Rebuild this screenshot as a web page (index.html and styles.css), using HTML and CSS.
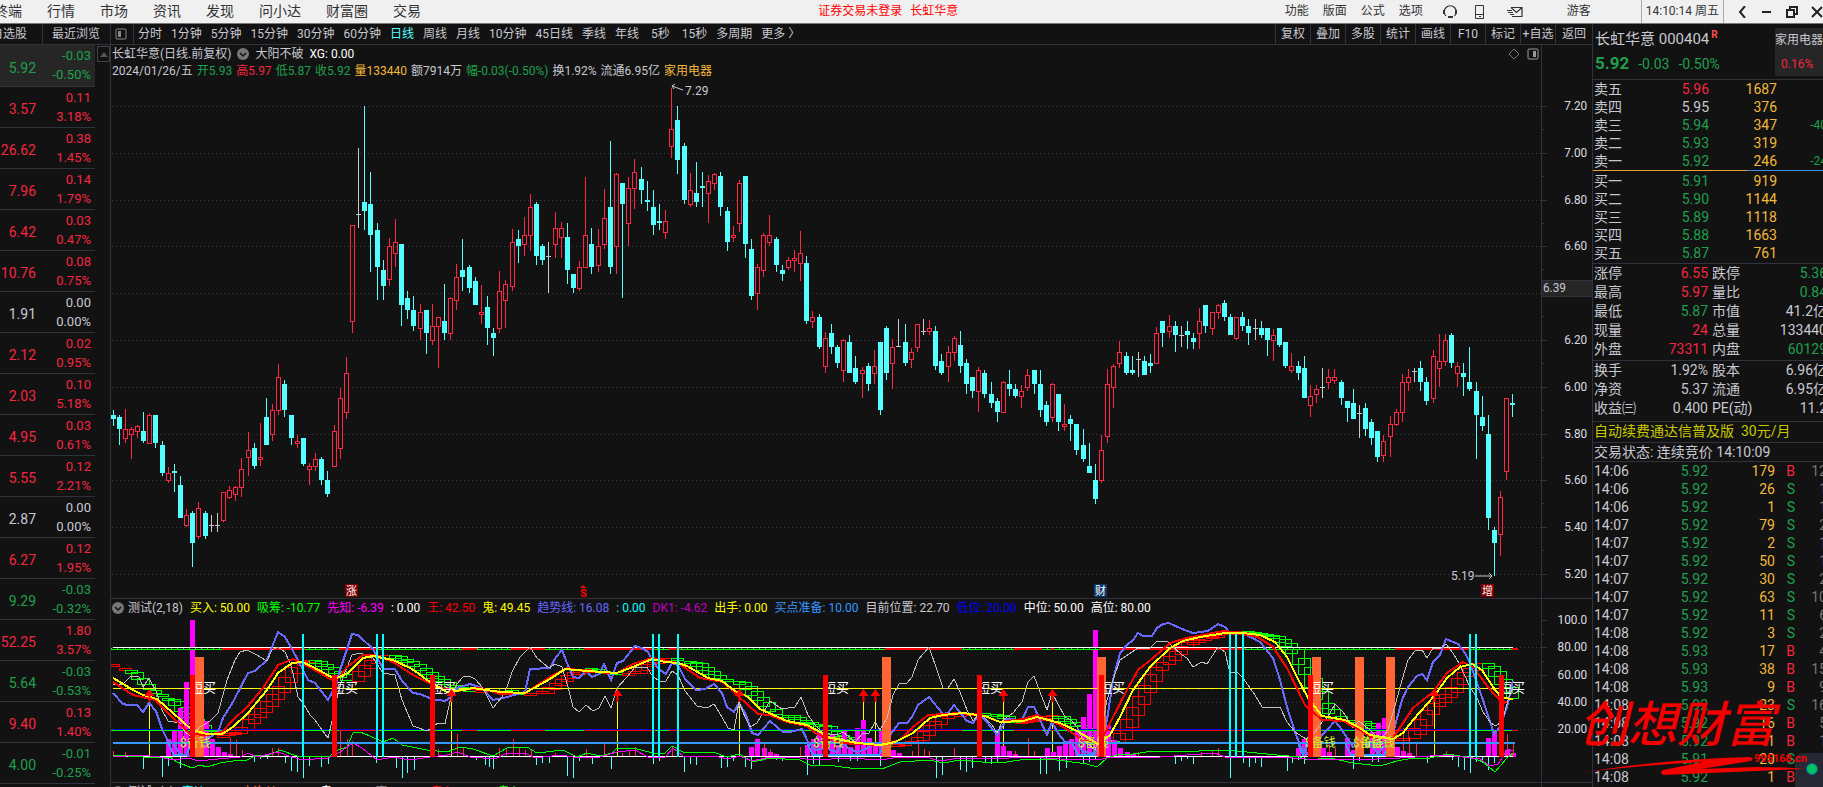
FILE: index.html
```
<!DOCTYPE html>
<html lang="zh-CN">
<head>
    <meta charset="UTF-8">
    <meta name="viewport" content="width=device-width, initial-scale=1.0">
    <title>长虹华意 000404</title>
    <link rel="stylesheet" href="styles.css">
</head>
<body>

<header class="topbar">
    <nav class="menu">
        <a href="#">终端</a><a href="#">行情</a><a href="#">市场</a><a href="#">资讯</a><a href="#">发现</a><a href="#">问小达</a><a href="#">财富圈</a><a href="#">交易</a>
    </nav>
    <div class="notice"><span>证券交易未登录</span><span>长虹华意</span></div>
    <div class="tools">
        <a href="#">功能</a><a href="#">版面</a><a href="#">公式</a><a href="#">选项</a>
        <svg class="tool-icon headset" width="16" height="16" viewBox="0 0 16 16"><path d="M4 12A6 6 0 1 1 12.500 12" fill="none" stroke="#333" stroke-width="1.200"/><path d="M1 6h2v4H1zM13 6h2v4h-2zM6 12h5v2H6z" fill="#333"/></svg>
        <svg class="tool-icon" width="16" height="16" viewBox="0 0 16 16"><path d="M3.500 1.500h8v13h-8zM3.500 10.500h8M7 12.500h2" fill="none" stroke="#333"/></svg>
        <svg class="tool-icon mail" width="18" height="16" viewBox="0 0 18 16"><path d="M5 3.500h11v9H6M5 3.500l5.500 5 5.500-5M1 6.500h5M2 8.500h5M4 10.500h4" fill="none" stroke="#333" stroke-width="1.200"/></svg>
        <a class="guest" href="#">游客</a>
    </div>
    <div class="clock">14:10:14 周五</div>
    <div class="win">
        <button aria-label="后退"><svg width="12" height="12"><path d="M9 0L4 6l5 6" fill="none" stroke="#222" stroke-width="2"/></svg></button>
        <button aria-label="最小化"><svg width="12" height="12"><path d="M1 6h9" stroke="#222" stroke-width="2"/></svg></button>
        <button aria-label="还原"><svg width="12" height="12"><path d="M1 4h7v7H1zM4 4V1h7v7H8" fill="none" stroke="#222" stroke-width="2"/></svg></button>
        <button aria-label="关闭"><svg width="12" height="12"><path d="M1 1l10 10M11 1L1 11" stroke="#222" stroke-width="2"/></svg></button>
    </div>
</header>

<div class="workspace">
    <aside class="watch">
        <div class="watch-tabs"><a href="#">自选股</a><a href="#">最近浏览</a></div>
        <div class="watch-body">
            <table class="watch-list"><tbody id="watch"></tbody></table>
            <button class="scroll-up" aria-label="向上"><svg width="8" height="5"><path d="M0 5l4-5 4 5z" fill="#555"/></svg></button>
        </div>
    </aside>

    <main class="center">
        <div class="periods">
            <button class="side" aria-label="侧栏"><svg width="12" height="12"><rect x="1" y="1" width="10" height="10" rx="1" fill="none" stroke="#888"/><path d="M3 3h3v6H3z" fill="#888"/></svg></button>
            <nav class="period-list">
                <a href="#">分时</a><a href="#">1分钟</a><a href="#">5分钟</a><a href="#">15分钟</a><a href="#">30分钟</a><a href="#">60分钟</a><a class="on" href="#">日线</a><a href="#">周线</a><a href="#">月线</a><a href="#">10分钟</a><a href="#">45日线</a><a href="#">季线</a><a href="#">年线</a><a class="sec" href="#">5秒</a><a class="sec" href="#">15秒</a><a href="#">多周期</a><a href="#">更多 〉</a>
            </nav>
            <div class="actions">
                <button>复权</button><button>叠加</button><button>多股</button><button>统计</button><button>画线</button><button>F10</button><button>标记</button><button class="tight">+自选</button><button>返回</button>
            </div>
        </div>

        <section class="pane">
            <div class="pane-main">
                <div class="line">
                    <span>长虹华意(日线.前复权)</span>
                    <svg class="fold" width="12" height="12"><circle cx="6" cy="6" r="6" fill="#777"/><path d="M3 5l3 3 3-3" fill="none" stroke="#131213" stroke-width="1.500"/></svg>
                    <span>大阳不破</span> <span class="white">XG: 0.00</span>
                    <span class="corner">
                        <svg width="12" height="12"><path d="M6 1l5 5-5 5-5-5z" fill="none" stroke="#777"/></svg>
                        <svg width="12" height="12"><rect x="1" y="1" width="10" height="10" rx="1" fill="none" stroke="#999"/><path d="M6 3h3v6H6z" fill="#999"/></svg>
                    </span>
                </div>
                <div class="line quote">
                    <span>2024/01/26/五</span><span class="down">开5.93</span><span class="up">高5.97</span><span class="down">低5.87</span><span class="down">收5.92</span><span class="gold">量133440</span><span>额7914万</span><span class="down">幅-0.03(-0.50%)</span><span>换1.92%</span><span>流通6.95亿</span><span class="gold">家用电器</span>
                </div>
                <svg id="kline" class="plot kline" viewBox="111 79 1430 519" preserveAspectRatio="none"></svg>
            </div>
            <svg id="kaxis" class="axis" viewBox="1541 45 51 553" preserveAspectRatio="none"></svg>
        </section>

        <section class="pane">
            <div class="pane-main">
                <div class="line inds">
                    <svg class="fold" width="12" height="12"><circle cx="6" cy="6" r="6" fill="#777"/><path d="M3 5l3 3 3-3" fill="none" stroke="#131213" stroke-width="1.500"/></svg>
                    <span>测试(2,18)</span><span class="c-yellow">买入: 50.00</span><span class="c-green">吸筹: -10.77</span><span class="c-magenta">先知: -6.39</span><span class="white">: 0.00</span><span class="c-red">王: 42.50</span><span class="c-yellow">鬼: 49.45</span><span class="c-violet">趋势线: 16.08</span><span class="c-cyan">: 0.00</span><span class="c-purple">DK1: -4.62</span><span class="c-yellow">出手: 0.00</span><span class="c-sky">买点准备: 10.00</span><span>目前位置: 22.70</span><span class="c-blue">低位: 20.00</span><span class="white">中位: 50.00</span><span class="white">高位: 80.00</span>
                </div>
                <svg id="ind" class="plot ind" viewBox="111 616 1430 166" preserveAspectRatio="none"></svg>
            </div>
            <svg id="iaxis" class="axis" viewBox="1541 599 51 183" preserveAspectRatio="none"></svg>
        </section>

        <section class="pane next">
            <div class="pane-main">
                <div class="line inds">
                    <svg class="fold" width="12" height="12"><circle cx="6" cy="6" r="6" fill="#777"/></svg>
                    <span>测试Y(1)</span><span class="c-cyan">底炒: 0.00</span><span class="c-orange">启次炒: 18.67</span><span class="white">鬼: 24.24</span><span class="c-grey">高: 26.24</span><span class="c-red">鬼入: 18.67</span><span class="c-green">鬼入: 22.81</span><span class="c-violet">: 18.23</span><span class="c-magenta">: 20.02</span>
                </div>
            </div>
            <div class="axis"></div>
        </section>
    </main>

    <aside class="detail">
        <div class="head">
            <div>
                <h1>长虹华意 000404<sup>R</sup></h1>
                <p class="down"><b>5.92</b><span>-0.03</span><span>-0.50%</span></p>
            </div>
            <div class="sector"><span>家用电器</span><span class="up">0.16%</span></div>
        </div>
        <table class="book sell"><tbody id="sell"></tbody></table>
        <div class="ratio"><i></i></div>
        <table class="book buy"><tbody id="buy"></tbody></table>
        <table class="facts">
            <tbody>
                <tr><th>涨停</th><td class="up">6.55</td><th>跌停</th><td class="down">5.36</td></tr>
                <tr><th>最高</th><td class="up">5.97</td><th>量比</th><td class="down">0.84</td></tr>
                <tr><th>最低</th><td class="down">5.87</td><th>市值</th><td>41.2亿</td></tr>
                <tr><th>现量</th><td class="up">24</td><th>总量</th><td>133440</td></tr>
                <tr><th>外盘</th><td class="up">73311</td><th>内盘</th><td class="down">60129</td></tr>
            </tbody>
        </table>
        <table class="facts tall">
            <tbody>
                <tr><th>换手</th><td>1.92%</td><th>股本</th><td>6.96亿</td></tr>
                <tr><th>净资</th><td>5.37</td><th>流通</th><td>6.95亿</td></tr>
                <tr><th>收益㈢</th><td>0.400</td><th>PE(动)</th><td>11.2</td></tr>
            </tbody>
        </table>
        <a class="promo" href="#">自动续费通达信普及版&nbsp; 30元/月</a>
        <div class="status">交易状态: 连续竞价 14:10:09</div>
        <table class="ticks"><tbody id="ticks"></tbody></table>
        <div class="float-dot"><i></i></div>
        <div class="stamp">
            <span class="stamp-name">创想财富</span>
            <span class="stamp-site">995168.cn</span>
            <svg width="224" height="22" viewBox="0 0 224 22"><path d="M0 17Q80 4 164 2q6 1 2 4L116 14l54-2q30 0 48 2l-48 2-92 4q-4-3 0-5l40-8Q60 10 0 17z" fill="#f40000"/></svg>
        </div>
    </aside>
</div>

<script src="chart.js"></script>
</body>
</html>
```
FILE: styles.css
```
* {
    box-sizing: border-box;
}
body {
    margin: 0;
    height: 100vh;
    overflow: hidden;
    display: flex;
    flex-direction: column;
    background: #131213;
    color: #c8c8d0;
    font-family: Roboto, "Noto Sans CJK SC", sans-serif;
    font-size: 12px;
    line-height: 17px;
}
a {
    color: inherit;
    text-decoration: none;
    white-space: nowrap;
}
button {
    border: 0;
    padding: 0;
    background: none;
    color: inherit;
    font: inherit;
    cursor: pointer;
}
svg {
    display: block;
}
table {
    border-collapse: collapse;
}
th, td {
    padding: 0;
    font-weight: normal;
    text-align: right;
    white-space: nowrap;
}
.up { color: #f5263f; }
.down { color: #1fa04c; }
.gold { color: #f2b83b; }
.white { color: #fff; }
.c-yellow { color: #ff0; }
.c-green { color: #0f0; }
.c-magenta { color: #f0f; }
.c-red { color: #f00; }
.c-violet { color: #66f; }
.c-cyan { color: #0ff; }
.c-purple { color: #c000c0; }
.c-sky { color: #3399ff; }
.c-blue { color: #00f; }
.c-orange { color: #f63; }
.c-grey { color: #888; }

/* top menu */
.topbar {
    flex: none;
    display: flex;
    align-items: center;
    height: 24px;
    overflow: hidden;
    background: #f0f0f0;
    border-bottom: 1px solid #777;
    color: #333;
}
.menu {
    display: flex;
    gap: 25px;
    width: 45%;
    margin-left: -6px;
    font-size: 14px;
}
.notice {
    display: flex;
    gap: 8px;
    margin-left: 4px;
    color: #f00;
    flex: 1;
}
.tools {
    display: flex;
    align-items: center;
    gap: 14px;
    margin-right: 50px;
}
.headset {
    margin-left: 5px;
}
.mail {
    margin-left: 4px;
}
.guest {
    margin-left: 29px;
}
.clock {
    padding: 3px 4px;
    border-left: 1px solid #aaa;
    border-right: 1px solid #aaa;
}
.win {
    display: flex;
    gap: 13px;
    padding-left: 12px;
}
.win button {
    flex: none;
}

.workspace {
    flex: 1;
    min-height: 0;
    display: flex;
}

/* watch list */
.watch {
    flex: none;
    width: 110px;
    overflow: hidden;
}
.watch-tabs {
    display: flex;
    height: 21px;
    line-height: 20px;
    border-bottom: 1px solid #30323e;
}
.watch-tabs a {
    padding: 0 9px;
}
.watch-tabs a:first-child {
    flex: none;
    width: 52px;
    margin-left: -9px;
    padding: 0;
    border-right: 1px solid #30323e;
}
.watch-body {
    display: flex;
    justify-content: space-between;
    align-items: flex-start;
}
.watch-list {
    width: 95px;
    font-size: 13px;
}
.watch-list tr {
    height: 41px;
    border-bottom: 1px solid #30323e;
}
.watch-list tr:first-child {
    background: #262626;
}
.watch-list td {
    line-height: 19px;
}
.watch-list td:first-child {
    width: 36px;
    padding-top: 6px;
    font-size: 14px;
}
.watch-list td:last-child {
    padding-right: 4px;
}
.watch-list span {
    display: block;
}
.scroll-up {
    width: 13px;
    height: 16px;
    margin-top: 1px;
    display: flex;
    align-items: center;
    justify-content: center;
    border: 1px solid #444;
}

/* charts */
.center {
    flex: 1;
    min-width: 0;
    border-left: 1px solid #30323e;
}
.periods {
    display: flex;
    height: 21px;
    line-height: 20px;
    border-bottom: 1px solid #30323e;
}
.side {
    padding: 0 6px 0 4px;
    border-right: 1px solid #30323e;
}
.period-list {
    display: flex;
    flex: 1;
    gap: 9px;
    padding-left: 4px;
}
.period-list .on {
    color: #54ffff;
}
.period-list .sec {
    margin-left: 3px;
}
.actions {
    display: flex;
}
.actions button {
    width: 35px;
    border-left: 1px solid #30323e;
    white-space: nowrap;
}
.actions button:last-child {
    width: 37px;
}
.pane {
    display: flex;
    border-bottom: 1px solid #30323e;
}
.pane-main {
    flex: 1;
    min-width: 0;
}
.line {
    display: flex;
    align-items: center;
    height: 17px;
    padding: 1px 1px 0;
    gap: 6px;
    white-space: nowrap;
}
.quote {
    gap: 4px;
}
.inds {
    gap: 7px;
}
.fold {
    flex: none;
}
.inds .fold {
    margin-right: -3px;
}
.corner {
    display: flex;
    gap: 7px;
    margin-left: auto;
    padding-right: 1px;
}
.plot {
    width: 100%;
}
.kline {
    height: 519px;
}
.ind {
    height: 166px;
}
.axis {
    flex: none;
    width: 51px;
    border-left: 1px solid #30323e;
}
.next {
    border-bottom: 0;
}
text {
    font-family: Roboto, "Noto Sans CJK SC", sans-serif;
}

/* quote panel */
.detail {
    position: relative;
    flex: none;
    width: 231px;
    clip-path: inset(0 0 0 -20px);
    border-left: 1px solid #30323e;
    font-size: 14px;
}
.detail table {
    width: 234px;
    table-layout: fixed;
}
.detail th {
    text-align: left;
    padding-left: 1px;
}
.head {
    display: flex;
    justify-content: space-between;
    height: 56px;
    padding: 4px 0 0 2px;
    border-bottom: 1px solid #30323e;
}
.head h1 {
    margin: 0;
    font-size: 15px;
    font-weight: normal;
    line-height: 22px;
}
.head sup {
    color: #ff4d4d;
    font-size: 10px;
    font-weight: bold;
    line-height: 10px;
    margin-left: 2px;
}
.head p {
    display: flex;
    align-items: baseline;
    gap: 9px;
    margin: 0;
    line-height: 26px;
}
.head b {
    font-size: 17px;
}
.sector {
    width: 48px;
    height: 48px;
    background: #262626;
    font-size: 12px;
    line-height: 24px;
    white-space: nowrap;
}
.sector span {
    display: block;
}
.sector .up {
    padding-left: 6px;
}
.book tr {
    height: 18px;
}
.book {
    line-height: 18px;
}
.book td:nth-child(2) {
    width: 76px;
}
.book td:nth-child(3) {
    width: 68px;
    color: #f2b83b;
}
.book td:nth-child(4) {
    width: 50px;
    font-size: 12px;
}
.ratio {
    height: 1px;
    margin: 0 0 1px;
    background: #3a8ee0;
}
.ratio i {
    display: block;
    width: 154px;
    height: 1px;
    background: #e8a030;
}
.buy {
    margin-bottom: 1px;
}
.facts {
    line-height: 19px;
    border-top: 1px solid #30323e;
}
.facts td {
    width: 66px;
}
.facts td:last-child {
    width: 70px;
}
.facts th:nth-child(3) {
    padding-left: 4px;
}
.facts tr {
    height: 19px;
}
.facts + .facts {
    margin-top: 1px;
}
.promo {
    display: block;
    margin-top: 3px;
    height: 21px;
    padding-left: 1px;
    line-height: 19px;
    color: #c8c800;
    border-top: 1px solid #30323e;
}
.status {
    padding-left: 1px;
    height: 20px;
    line-height: 18px;
    border-top: 1px solid #30323e;
    border-bottom: 1px solid #30323e;
    white-space: nowrap;
}
.ticks tr {
    height: 18px;
}
.ticks {
    line-height: 18px;
}
.ticks td:nth-child(2) {
    width: 65px;
}
.ticks td:nth-child(3) {
    width: 67px;
    color: #f2b83b;
}
.ticks td:nth-child(4) {
    width: 20px;
}
.ticks td:nth-child(5) {
    width: 32px;
    color: #777;
}
.float-dot {
    position: absolute;
    right: 0;
    bottom: 0;
    width: 28px;
    height: 34px;
    padding: 10px 0 0 11px;
    border-radius: 8px 0 0 0;
    background: #262833;
}
.float-dot i {
    display: block;
    width: 12px;
    height: 12px;
    border: 1px solid #1560a0;
    border-radius: 50%;
    background: #00c060;
}

/* site stamp laid over the panel edge */
.stamp {
    position: absolute;
    left: -8px;
    bottom: 10px;
    width: 224px;
    color: #f40000;
}
.stamp-name {
    display: block;
    margin-left: -6px;
    font-size: 49px;
    font-weight: 500;
    line-height: 58px;
    font-style: italic;
    white-space: nowrap;
}
.stamp-site {
    position: absolute;
    right: 2px;
    bottom: 12px;
    font-size: 11px;
    font-weight: bold;
    line-height: 12px;
}
```
FILE: chart.js
```
const NS = 'http://www.w3.org/2000/svg';

function add(svg, tag, attrs, text) {
    const el = document.createElementNS(NS, tag);
    for (const k in attrs) el.setAttribute(k, attrs[k]);
    if (text) el.textContent = text;
    svg.appendChild(el);
    return el;
}
function rect(svg, x, y, w, h, fill) {
    add(svg, 'rect', { x: x, y: y, width: w, height: h, fill: fill, 'shape-rendering': 'crispEdges' });
}
function line(svg, points, color, width) {
    add(svg, 'polyline', { points: points, fill: 'none', stroke: color, 'stroke-width': width, 'shape-rendering': 'crispEdges' });
}
function grid(svg, y) {
    add(svg, 'path', { d: 'M112 ' + (y + 0.5) + 'H1541', stroke: '#3c3c46', 'stroke-dasharray': '1 3', fill: 'none' });
}

// ---- candles: kind, high, body top, body bottom, low (d = down, u = up, w = flat)
const candles = `
d410,415,419,426 d415,417,429,445 u409,429,439,443 u427,429,435,459 u425,426,432,438 d412,431,441,443 u413,415,444,444 d415,415,443,448
d441,445,473,476 u467,473,481,483 d464,471,473,492 d476,485,518,518 u509,515,526,527 d511,513,543,567 u502,508,537,539 d511,513,536,539
w515,525,525,532 w513,525,525,532 u492,492,521,522 u486,490,498,499 u486,487,495,501 u458,469,488,497 u432,450,458,476 d443,448,466,469
u423,457,460,466 d398,417,445,445 u404,410,435,441 u364,377,411,415 d380,384,410,417 d415,415,438,445 u435,441,444,448 d438,438,464,466
u463,466,470,485 u453,459,467,471 d457,459,480,485 d471,480,494,497 u425,431,467,467 u388,398,449,459 u357,373,413,419 u225,225,322,333
w148,214,214,228 d106,202,211,230 d172,204,235,272 d223,230,267,300 d260,270,286,300 u238,246,280,286 u219,242,254,267 d244,244,305,326
d291,298,310,319 d296,310,326,331 u304,312,329,340 d310,310,333,354 u304,326,341,345 u317,317,327,368 d284,321,333,340 u297,298,334,340
u264,277,301,310 d239,270,277,291 d265,267,288,293 d277,281,305,305 u285,312,315,324 d296,307,328,345 d328,333,338,356 u271,291,329,333
u280,284,301,328 u229,242,287,291 d230,239,246,263 u217,235,245,256 u194,207,236,251 d202,204,256,265 d244,246,260,265 w242,256,256,293
u212,228,245,258 u222,228,238,258 d223,237,270,284 d274,274,288,293 u261,267,289,291 u177,235,268,268 d228,244,267,274 u229,246,266,272
u189,218,245,249 d141,207,267,274 u173,174,247,274 d183,183,204,298 u177,188,224,246 u159,172,189,209 d167,179,190,204 d181,200,202,211
d190,207,225,235 d204,221,223,230 u210,221,233,239 u88,129,147,158 d106,120,160,174 d143,146,200,204 u173,190,205,207 d162,193,202,207
d172,186,188,207 u175,181,194,223 u173,174,184,190 d172,176,207,216 d207,211,242,251 u226,235,238,242 u180,183,224,232 d176,176,244,258
d239,249,296,300 u264,267,294,310 u233,235,271,277 u215,235,243,246 d237,239,265,272 d265,270,274,281 u257,260,268,270 u250,258,261,272
u231,253,264,281 d256,263,321,324 u311,317,322,328 d314,317,347,349 u332,338,367,373 d324,333,347,354 d345,347,363,368 u339,340,371,382
d335,342,373,373 d356,368,382,384 u367,370,374,398 d363,366,384,391 u350,366,374,384 d342,342,410,415 d326,328,373,380 u339,347,364,389
w319,346,346,347 d324,342,363,366 u348,352,360,368 u324,324,348,352 w319,331,331,335 u320,328,332,335 d326,331,366,370 d354,361,373,375
u346,352,367,382 u336,338,353,361 d331,345,366,373 d359,363,384,394 d377,377,391,398 u367,370,392,412 d370,373,394,398 d382,394,403,408
d398,401,412,422 u381,382,413,413 d370,384,389,396 d384,389,396,398 u385,391,397,408 u369,375,388,391 d370,370,384,394 d370,384,410,417
d401,405,422,426 u383,384,418,422 d394,394,422,431 u404,424,427,431 d415,419,424,441 d424,424,450,455 d429,445,459,462 d443,466,473,473
d464,480,499,504 u435,450,481,483 u369,384,437,443 u364,366,388,408 u341,352,364,368 d352,356,373,375 d356,370,373,375 w352,359,359,377
d356,361,375,375 d354,363,366,373 u327,333,364,364 d321,321,333,347 u315,326,332,338 d321,326,335,352 w326,335,335,347 d321,331,335,349
d333,338,342,349 u308,321,334,349 d305,305,326,333 u312,312,329,335 u304,305,313,319 d300,303,317,321 d314,317,335,335 u317,317,339,340
d312,317,326,331 d319,326,333,345 w319,328,328,340 d321,328,335,338 d328,328,340,356 u329,335,341,361 d328,328,345,347 d342,342,366,368
u353,366,371,373 d361,366,373,380 d356,368,398,398 u385,396,406,417 u385,389,395,403 w368,387,387,398 u369,377,383,389 u369,377,381,384
d380,382,398,405 d401,401,408,422 d389,403,419,419 w405,413,413,438 d403,408,429,436 d419,422,438,445 d431,431,457,462 u435,441,456,462
u416,424,437,457 u409,412,425,426 u374,382,413,422 u369,377,383,391 w368,371,371,382 d361,368,382,391 d377,382,401,405 u350,356,399,403
u334,361,369,387 u334,340,362,366 d333,335,363,368 u362,366,374,387 d363,373,377,396 d347,382,389,391 d382,391,415,459 d396,417,426,431
d415,434,518,530 d527,530,543,576 u491,497,535,556 u398,398,472,480 d394,403,405,417`.trim().split(/\s+/);

const k = document.getElementById('kline');
for (let i = 0; i < 11; i++) grid(k, Math.round(106 + i * 46.8));
candles.forEach(function (c, i) {
    const x = 113 + Math.floor(i * 6.14);
    const v = c.slice(1).split(',').map(Number);
    const h = Math.max(v[2] - v[1], 1);
    if (c[0] === 'd') {
        rect(k, x, v[0], 1, v[3] - v[0], '#54ffff');
        rect(k, x - 2, v[1], 5, h, '#54ffff');
    } else if (c[0] === 'u') {
        rect(k, x, v[0], 1, v[1] - v[0], '#ff2645');
        rect(k, x, v[2], 1, v[3] - v[2], '#ff2645');
        add(k, 'rect', { x: x - 1.5, y: v[1] + 0.5, width: 4, height: Math.max(h - 1, 1), fill: 'none', stroke: '#ff2645', 'shape-rendering': 'crispEdges' });
    } else {
        rect(k, x, v[0], 1, v[3] - v[0], '#c8c8d0');
        rect(k, x - 2, v[1], 5, 1, '#c8c8d0');
    }
});
add(k, 'path', { d: 'M683 90L672 86M675 84L672 86L674 89', stroke: '#c8c8d0', fill: 'none' });
add(k, 'text', { x: 685, y: 95, fill: '#c8c8d0', 'font-size': 12 }, '7.29');
add(k, 'path', { d: 'M1475 576H1492M1489 573l3 3-3 3', stroke: '#c8c8d0', fill: 'none' });
add(k, 'text', { x: 1451, y: 580, fill: '#c8c8d0', 'font-size': 12 }, '5.19');

// event marks under the candles
[[345, '涨', '#800000'], [1094, '财', '#0a3668'], [1481, '增', '#800000']].forEach(function (m) {
    rect(k, m[0], 584, 13, 13, m[2]);
    add(k, 'text', { x: m[0] + 1, y: 595, fill: '#fff', 'font-size': 11 }, m[1]);
});
add(k, 'text', { x: 580, y: 597, fill: '#f00', 'font-size': 11, 'font-weight': 700 }, 'S');
add(k, 'path', { d: 'M580 588l3-3 3 3z', fill: '#f00' });

// ---- price axis
const ka = document.getElementById('kaxis');
for (let i = 0; i < 11; i++) {
    const y = Math.round(106 + i * 46.8);
    rect(ka, 1541, y, 5, 1, '#30323e');
    if (i < 10) rect(ka, 1541, y + 23, 2, 1, '#30323e');
    if (i !== 4) add(ka, 'text', { x: 1587, y: y + 4, fill: '#dcdce0', 'font-size': 12, 'text-anchor': 'end' }, (7.2 - i * 0.2).toFixed(2));
}
rect(ka, 1541, 280, 51, 17, '#30323e');
rect(ka, 1541, 281, 51, 15, '#262626');
add(ka, 'text', { x: 1542, y: 292, fill: '#c8c8d0', 'font-size': 12 }, '6.39');

const ia = document.getElementById('iaxis');
['100.0', '80.00', '60.00', '40.00', '20.00'].forEach(function (t, i) {
    const y = Math.round(620 + i * 27.3);
    rect(ia, 1541, y, 5, 1, '#30323e');
    if (i < 4) rect(ia, 1541, y + 14, 2, 1, '#30323e');
    add(ia, 'text', { x: 1587, y: y + 4, fill: '#dcdce0', 'font-size': 12, 'text-anchor': 'end' }, t);
});

// ---- indicator pane
const s = document.getElementById('ind');
[647, 675, 702, 729].forEach(function (y) { grid(s, y); });

const king = '113,682 133,695 155,700 167,712 190,734 207,735 222,732 233,720 247,707 263,688 278,665 293,659 302,663 320,673 335,682 347,667 363,655 373,655 393,662 413,675 433,685 437,687 457,691 480,688 500,694 525,693 553,675 567,668 587,672 617,673 633,664 652,658 678,663 700,678 723,682 737,695 758,714 770,715 787,722 807,726 815,733 840,743 857,744 880,745 900,740 913,727 928,715 960,713 982,715 1000,722 1023,719 1037,715 1060,725 1083,740 1100,743 1110,723 1127,690 1138,670 1153,658 1170,643 1187,638 1218,632 1225,631 1258,637 1273,647 1287,668 1305,705 1322,720 1343,721 1360,730 1373,738 1393,738 1403,723 1413,708 1433,692 1447,673 1463,662 1473,667 1488,687 1502,703 1507,702';
const ghost = '113,678 135,691 143,695 157,699 173,713 192,730 207,734 222,734 233,727 248,713 267,690 278,673 292,663 302,662 313,667 335,679 348,673 363,658 373,656 393,660 412,669 430,682 447,692 463,690 473,688 500,692 525,693 550,679 565,669 587,671 617,673 633,667 652,659 665,662 678,663 687,666 708,678 722,681 735,691 748,697 760,709 787,721 807,725 822,733 827,737 857,743 880,745 895,742 913,733 930,718 943,715 963,713 985,716 1000,722 1023,721 1037,717 1060,723 1077,731 1098,744 1110,735 1120,717 1133,690 1150,667 1170,648 1183,641 1200,637 1225,633 1243,633 1260,635 1275,642 1287,657 1297,677 1308,698 1322,716 1345,720 1360,728 1370,735 1393,739 1403,733 1413,720 1435,695 1447,678 1460,667 1472,664 1482,670 1495,690 1502,698 1513,699';
const trend = '113,693 123,704 128,705 137,705 143,712 149,703 156,711 162,729 168,741 173,743 180,754 190,756 200,752 207,739 218,732 223,718 233,702 248,673 255,671 267,660 272,647 278,632 285,637 292,649 302,668 308,680 315,683 328,700 335,687 340,670 352,634 358,635 373,649 383,669 395,669 402,681 413,693 420,694 432,699 445,701 451,697 457,688 470,684 482,688 493,700 507,697 525,692 530,669 550,668 556,657 562,650 567,663 573,677 579,678 586,671 592,677 599,674 604,664 611,680 617,663 623,661 635,646 642,648 648,652 653,662 660,670 666,674 672,663 678,665 685,679 696,690 705,689 714,684 722,693 727,707 734,712 739,703 746,715 752,733 758,735 770,721 777,727 783,732 790,732 802,729 808,742 815,750 825,748 837,752 843,743 848,748 857,752 868,748 875,743 882,747 890,735 899,723 907,723 912,717 918,705 929,697 943,714 948,713 954,705 967,721 973,723 979,714 987,722 997,735 1007,719 1022,720 1028,707 1034,707 1047,735 1052,722 1058,733 1065,742 1077,743 1083,752 1093,753 1102,743 1107,720 1113,680 1120,653 1127,645 1133,640 1138,633 1143,636 1152,636 1157,628 1163,624 1169,623 1182,629 1193,633 1208,631 1218,624 1225,627 1230,633 1243,633 1260,642 1273,658 1280,680 1287,707 1295,732 1300,745 1306,755 1314,745 1322,735 1327,730 1335,721 1342,730 1353,747 1362,743 1373,747 1378,753 1386,745 1393,733 1402,700 1408,687 1417,676 1422,674 1427,680 1433,662 1440,655 1446,639 1458,644 1465,653 1470,663 1477,683 1483,700 1494,734 1500,727 1507,707 1513,681';
const place = '113,685 123,684 130,677 136,676 139,677 143,687 149,678 157,693 162,710 168,721 180,723 185,732 192,737 200,727 210,721 218,713 227,680 235,660 240,652 247,650 255,654 267,661 272,650 278,647 285,652 290,663 293,673 298,697 303,703 310,715 315,720 322,730 328,738 333,717 338,693 343,677 352,655 360,653 373,658 383,673 395,675 402,700 413,726 427,731 438,723 445,724 451,697 457,684 463,677 469,676 475,679 483,688 493,708 502,697 507,687 512,672 520,657 530,647 537,658 549,668 555,664 562,667 568,687 573,707 579,712 586,705 593,711 599,708 605,696 611,708 617,688 627,677 635,667 647,667 653,677 660,681 666,681 672,671 678,675 685,691 697,706 707,708 714,704 722,717 728,728 734,730 739,702 745,717 750,727 757,723 770,701 782,709 795,707 801,697 808,715 815,725 823,733 837,735 843,732 855,742 863,733 869,733 875,722 880,730 887,718 893,695 899,684 907,683 912,677 918,660 929,647 937,670 943,688 948,688 954,679 960,692 967,710 973,721 980,713 992,725 997,733 1003,720 1013,713 1022,702 1028,682 1034,676 1040,692 1047,710 1052,693 1065,717 1071,720 1077,727 1083,740 1095,750 1102,727 1107,700 1113,680 1120,660 1138,648 1150,648 1157,641 1168,642 1182,655 1187,658 1193,667 1202,662 1207,664 1218,647 1225,652 1230,673 1237,672 1243,678 1255,695 1262,707 1270,708 1280,707 1287,722 1295,732 1306,739 1315,732 1322,722 1327,718 1335,704 1343,712 1353,728 1359,721 1370,730 1380,740 1388,730 1393,713 1402,680 1408,660 1415,651 1422,650 1427,658 1433,648 1440,649 1446,644 1453,653 1460,665 1470,687 1477,698 1483,712 1490,722 1495,726 1502,722 1508,700 1513,687';
const absorb = '113,755 143,757 170,757 177,762 192,768 200,765 207,767 220,763 233,761 247,760 257,755 267,756 280,750 297,756 317,757 330,756 338,750 347,747 353,733 360,732 370,736 383,742 393,738 402,745 427,750 447,752 460,747 473,749 493,756 507,748 527,747 537,753 563,750 577,757 587,753 600,756 612,753 617,748 633,748 653,753 665,753 672,746 683,752 713,752 727,757 739,754 753,762 770,758 800,760 810,765 827,765 850,768 882,769 900,762 930,760 943,763 960,760 982,762 1000,763 1027,759 1057,760 1087,764 1097,767 1107,758 1117,755 1133,754 1153,751 1180,752 1218,750 1237,751 1277,755 1300,757 1307,760 1330,758 1353,763 1380,766 1397,761 1413,758 1430,758 1447,754 1473,758 1483,762 1495,772 1507,758 1513,753';
const seer = '113,757 140,755 160,757 172,760 190,758 197,761 240,757 248,753 257,757 278,752 292,757 303,760 328,758 340,752 353,743 362,748 377,760 393,757 410,760 430,757 447,755 458,752 470,757 495,759 507,753 525,753 535,758 560,755 580,758 600,757 617,752 635,750 650,758 665,757 673,748 683,756 715,756 727,759 740,756 752,761 770,757 800,758 812,760 850,758 880,760 900,757 930,758 940,761 960,758 990,759 1028,757 1060,759 1098,760 1110,757 1160,757 1215,753 1225,757 1280,757 1306,759 1355,760 1400,758 1445,755 1480,759 1490,766 1498,764 1508,749 1513,751';

function toXY(str) {
    return str.split(' ').map(function (p) { return p.split(',').map(Number); });
}
const kingXY = toXY(king);
function at(x) {
    for (let i = 1; i < kingXY.length; i++) {
        const a = kingXY[i - 1], b = kingXY[i];
        if (x <= b[0]) return a[1] + (b[1] - a[1]) * (x - a[0]) / (b[0] - a[0]);
    }
    return kingXY[kingXY.length - 1][1];
}

// brick steps trailing the lines
for (let i = 0; i < 229; i++) {
    const x = 113 + Math.floor(i * 6.14);
    const lift = Math.max(18 - i * 2, 0);
    const a = Math.round(at(Math.max(x - 24, 113)) - lift);
    const b = Math.round(at(Math.max(x - 14, 113)) - lift);
    if (Math.abs(a - b) < 2 && i % 2) continue;
    add(s, 'rect', { x: x - 5.5, y: Math.min(a, b) + 0.5, width: 12, height: Math.max(Math.abs(a - b), 2), fill: 'none', stroke: b > a ? '#0f0' : '#f00', 'shape-rendering': 'crispEdges' });
}

// signal stems
[149, 451, 617, 739, 863, 875, 1003, 1052, 1434].forEach(function (x) { rect(s, x, 700, 1, 57, '#ff0'); });
// wide magenta bars: x, top
[[168,739],[174,729],[180,708],[186,682],[192,620],[206,721],[212,739],[218,747],[224,752],[230,754],[751,747],[757,739],[764,748],[770,752],[776,754],[807,745],[813,739],[819,730],[832,735],[838,745],[844,731],[850,747],[857,728],[863,720],[869,738],[875,745],[881,731],[893,750],[899,753],[997,733],[1003,746],[1009,751],[1015,754],[1047,748],[1053,752],[1059,746],[1065,743],[1071,739],[1077,731],[1083,717],[1089,694],[1095,630],[1108,725],[1114,740],[1120,748],[1127,752],[1133,754],[1298,748],[1304,739],[1323,748],[1329,752],[1347,738],[1353,750],[1372,732],[1378,723],[1384,718],[1397,747],[1403,751],[1409,753],[1488,738],[1494,730],[1507,750],[1513,753]].forEach(function (b) {
    rect(s, b[0] - 2, b[1], 5, 757 - b[1], '#f0f');
});
// thin bars above and below zero
[[113,751],[125,752],[230,738],[236,740],[242,750],[272,748],[278,748],[340,730],[347,739],[352,741],[438,749],[457,734],[463,748],[499,748],[506,749],[513,739],[519,747],[525,750],[531,750],[555,753],[586,749],[604,743],[622,753],[629,750],[635,747],[672,746],[678,752],[764,744],[770,749],[800,747],[912,751],[918,740],[924,749],[929,751],[954,748],[1015,751],[1028,738],[1034,751],[1138,752],[1201,752],[1212,750],[1218,748],[1329,744],[1335,748],[1403,728],[1409,737],[1416,743],[1446,751],[1507,734],[1513,744]].forEach(function (b) {
    rect(s, b[0], b[1], 1, 757 - b[1], '#ff2645');
});
[[143,769],[162,777],[168,766],[180,768],[254,762],[260,759],[267,759],[285,763],[291,771],[297,772],[303,778],[309,766],[321,767],[328,764],[376,763],[396,768],[402,778],[407,773],[414,770],[476,760],[485,765],[489,767],[493,769],[536,765],[542,763],[549,763],[567,776],[573,778],[579,761],[592,764],[611,769],[653,764],[659,761],[684,772],[690,764],[696,765],[721,768],[727,767],[733,761],[745,767],[751,769],[776,760],[782,761],[807,775],[813,764],[819,765],[838,762],[850,761],[857,761],[880,766],[936,778],[942,775],[960,770],[966,772],[972,768],[985,762],[991,764],[997,763],[1040,774],[1046,774],[1059,771],[1066,768],[1083,764],[1089,762],[1095,759],[1175,764],[1181,761],[1187,759],[1193,764],[1230,778],[1243,763],[1249,767],[1255,763],[1261,767],[1287,771],[1292,763],[1298,760],[1304,764],[1353,769],[1359,761],[1372,762],[1378,762],[1427,763],[1452,760],[1458,767],[1464,770],[1470,773],[1476,762],[1482,763],[1488,770],[1494,763]].forEach(function (b) {
    rect(s, b[0], 757, 1, b[1] - 757, '#54ffff');
});

// levels
const reds = [[222, 305], [339, 379], [462, 477], [511, 545], [584, 655], [669, 680], [885, 962], [1014, 1042], [1051, 1054], [1100, 1245], [1395, 1469], [1512, 1518]];
rect(s, 111, 648, 1402, 2, '#0f0');
add(s, 'path', { d: 'M112 648.5H1512', stroke: '#131213', 'stroke-dasharray': '5 1', fill: 'none' });
rect(s, 111, 730, 1402, 1, '#0f0');
reds.forEach(function (r) {
    rect(s, r[0], 648, r[1] - r[0], 2, '#f00');
    rect(s, r[0], 730, r[1] - r[0], 1, '#f00');
});
rect(s, 113, 647, 1400, 1, '#fff');
rect(s, 113, 729, 1400, 1, '#0000e0');
rect(s, 113, 688, 1400, 1, '#ff0');
add(s, 'path', { d: 'M119 688.5H1513', stroke: '#fff', 'stroke-dasharray': '1 11', fill: 'none' });
rect(s, 113, 756, 1400, 1, '#fff');

line(s, absorb, '#0f0', 1);
line(s, seer, '#f0f', 1);

// prepare line with its dips to zero
rect(s, 113, 742, 1402, 2, '#3399ff');
[[168, 192], [807, 885], [1072, 1100], [1298, 1308], [1345, 1390]].forEach(function (r) {
    const slope = Math.min(6, (r[1] - r[0]) / 2);
    line(s, r[0] + ',743 ' + (r[0] + slope) + ',755 ' + (r[1] - slope) + ',755 ' + r[1] + ',743', '#3399ff', 2);
});

line(s, trend, '#6a6aff', 2);
[195, 882, 1097, 1312, 1355, 1386].forEach(function (x) { rect(s, x, 657, 9, 100, '#ff6633'); });
line(s, place, '#c0c0c0', 1);
line(s, king, '#f00', 2);
line(s, ghost, '#ff0', 2);

[[180, '$备钱'], [813, '$备钱'], [1078, '$备钱'], [1305, '$备钱'], [1353, '$备钱'], [1364, '$备钱']].forEach(function (t) {
    add(s, 'text', { x: t[0], y: 747, fill: '#c8f032', 'font-size': 12 }, t[1]);
});
[190, 332, 430, 823, 977, 1099, 1308, 1499].forEach(function (x) {
    add(s, 'text', { x: x, y: 692, fill: '#fff', 'font-size': 13 }, '短买');
    rect(s, x, 675, 5, 82, '#f00');
});
[302, 376, 382, 652, 658, 677, 1229, 1235, 1242, 1469, 1475].forEach(function (x) { rect(s, x, 634, 2, 123, '#0ff'); });
[149, 451, 617, 739, 863, 875, 1003, 1052, 1434].forEach(function (x) {
    add(s, 'path', { d: 'M' + (x - 4.5) + ' 696l5-7 5 7h-4v6h-2v-6z', fill: '#f00' });
});

// ---- tables
const UP = 'up', DOWN = 'down', FLAT = '';
function row(cells) {
    return '<tr>' + cells.map(function (c) { return '<td class="' + c[1] + '">' + c[0] + '</td>'; }).join('') + '</tr>';
}
document.getElementById('watch').innerHTML = [
    ['5.92', '-0.03', '-0.50%'], ['3.57', '0.11', '3.18%'], ['26.62', '0.38', '1.45%'], ['7.96', '0.14', '1.79%'],
    ['6.42', '0.03', '0.47%'], ['10.76', '0.08', '0.75%'], ['1.91', '0.00', '0.00%'], ['2.12', '0.02', '0.95%'],
    ['2.03', '0.10', '5.18%'], ['4.95', '0.03', '0.61%'], ['5.55', '0.12', '2.21%'], ['2.87', '0.00', '0.00%'],
    ['6.27', '0.12', '1.95%'], ['9.29', '-0.03', '-0.32%'], ['52.25', '1.80', '3.57%'], ['5.64', '-0.03', '-0.53%'],
    ['9.40', '0.13', '1.40%'], ['4.00', '-0.01', '-0.25%']
].map(function (r) {
    const cls = r[1] === '0.00' ? FLAT : r[1][0] === '-' ? DOWN : UP;
    return row([[r[0], cls], ['<span>' + r[1] + '</span><span>' + r[2] + '</span>', cls]]);
}).join('');

function book(id, list) {
    document.getElementById(id).innerHTML = list.map(function (r) {
        const cls = r[1] > '5.95' ? UP : r[1] < '5.95' ? DOWN : FLAT;
        return '<tr><th>' + r[0] + '</th><td class="' + cls + '">' + r[1] + '</td><td>' + r[2] + '</td><td class="down">' + (r[3] || '') + '</td></tr>';
    }).join('');
}
book('sell', [['卖五', '5.96', 1687], ['卖四', '5.95', 376], ['卖三', '5.94', 347, '-40'], ['卖二', '5.93', 319], ['卖一', '5.92', 246, '-24']]);
book('buy', [['买一', '5.91', 919], ['买二', '5.90', 1144], ['买三', '5.89', 1118], ['买四', '5.88', 1663], ['买五', '5.87', 761]]);

document.getElementById('ticks').innerHTML = [
    ['14:06', '5.92', 179, 'B', 12], ['14:06', '5.92', 26, 'S', 1], ['14:06', '5.92', 1, 'S', 1], ['14:07', '5.92', 79, 'S', 2],
    ['14:07', '5.92', 2, 'S', 1], ['14:07', '5.92', 50, 'S', 1], ['14:07', '5.92', 30, 'S', 2], ['14:07', '5.92', 63, 'S', 10],
    ['14:07', '5.92', 11, 'S', 6], ['14:08', '5.92', 3, 'S', 2], ['14:08', '5.93', 17, 'B', 4], ['14:08', '5.93', 38, 'B', 15],
    ['14:08', '5.93', 9, 'B', 9], ['14:08', '5.92', 23, 'S', 16], ['14:08', '5.92', 16, 'B', 5], ['14:08', '5.92', 1, 'B', 1],
    ['14:08', '5.91', 20, 'S', 1], ['14:08', '5.92', 1, 'B', 1]
].map(function (t) {
    return '<tr><th>' + t[0] + '</th><td class="down">' + t[1] + '</td><td>' + t[2] + '</td><td class="' + (t[3] === 'B' ? UP : DOWN) + '">' + t[3] + '</td><td>' + t[4] + '</td></tr>';
}).join('');
```
